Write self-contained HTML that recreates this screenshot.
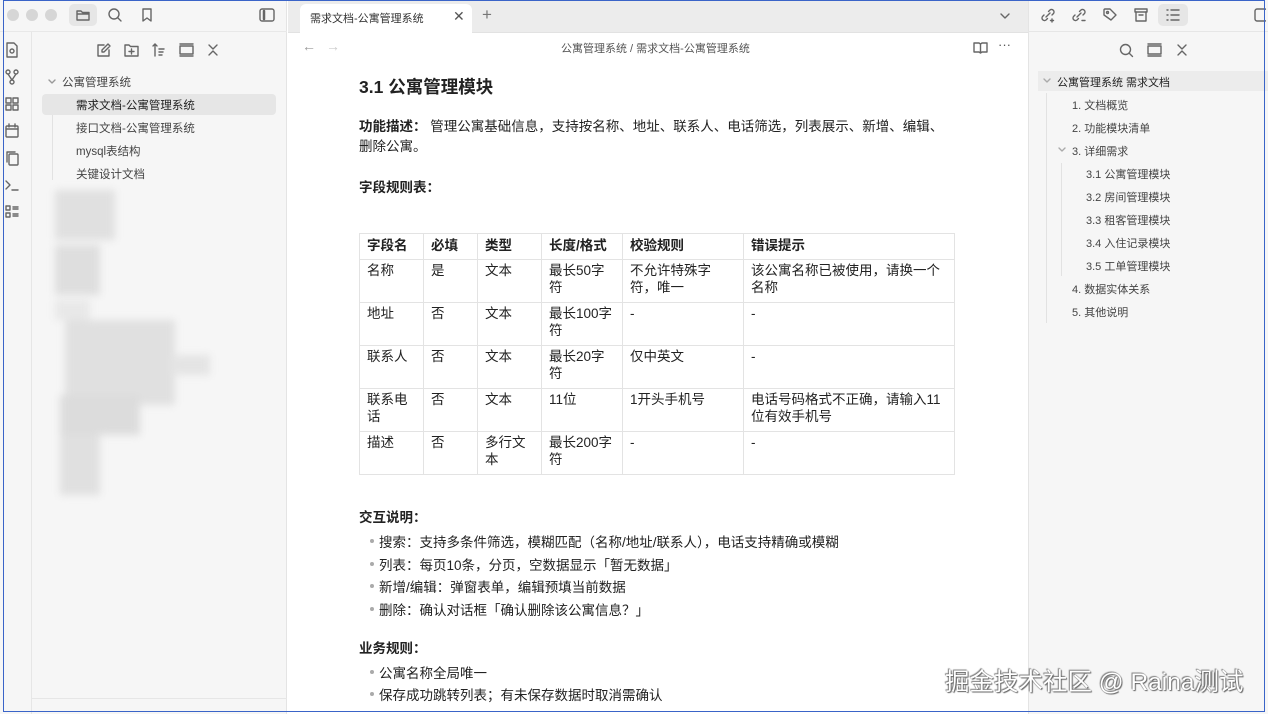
<!DOCTYPE html>
<html><head><meta charset="utf-8">
<style>
*{margin:0;padding:0;box-sizing:border-box}
body{width:1268px;height:714px;overflow:hidden;background:#fff;font-family:"Liberation Sans","Noto Sans CJK SC",sans-serif;color:#222;position:relative}
.a{position:absolute}
.t{font-size:11.5px;color:#444;white-space:nowrap}
svg.i{position:absolute;fill:none;stroke:#666;stroke-width:1.4;stroke-linecap:round;stroke-linejoin:round}
table{border-collapse:collapse;font-size:13.5px;color:#222}
td,th{border:1px solid #e3e3e3;vertical-align:top;text-align:left;padding:2px 7px 4px 7px;line-height:17px;font-weight:normal;white-space:nowrap}
th{font-weight:bold;padding:3px 7px}
.b{font-size:13.5px;line-height:20px;color:#222;white-space:nowrap}
.li{font-size:13.5px;color:#222;white-space:nowrap}
.li:before{content:"";position:absolute;left:-9px;top:8px;width:4px;height:4px;border-radius:50%;background:#aaa}
.ol{font-size:11px;color:#444;white-space:nowrap}
</style></head><body>
<div class="a" style="left:0;top:0;width:287px;height:714px;background:#f6f6f6;border-right:1px solid #e4e4e4"></div>
<div class="a" style="left:31px;top:32px;width:1px;height:682px;background:#e6e6e6"></div>
<div class="a" style="left:0;top:31px;width:287px;height:1px;background:#e8e8e8"></div>
<div class="a" style="left:7px;top:9px;width:12px;height:12px;border-radius:50%;background:#d6d6d6"></div>
<div class="a" style="left:26px;top:9px;width:12px;height:12px;border-radius:50%;background:#d6d6d6"></div>
<div class="a" style="left:45px;top:9px;width:12px;height:12px;border-radius:50%;background:#d6d6d6"></div>
<div class="a" style="left:69px;top:4px;width:28px;height:22px;border-radius:5px;background:#e6e6e6"></div>
<svg class="i" style="left:75px;top:7px" width="16" height="16" viewBox="0 0 16 16"><path d="M2 4h4l1.5 1.5H14V13H2z M2 7h12"/></svg>
<svg class="i" style="left:107px;top:7px" width="16" height="16" viewBox="0 0 16 16"><circle cx="7" cy="7" r="5"/><path d="M11 11l3 3"/></svg>
<svg class="i" style="left:139px;top:7px" width="16" height="16" viewBox="0 0 16 16"><path d="M4 2h8v12l-4-3-4 3z"/></svg>
<svg class="i" style="left:258px;top:7px" width="18" height="16" viewBox="0 0 18 16"><rect x="2" y="2" width="14" height="12" rx="2"/><path d="M6 4v8" stroke-width="2.5"/></svg>
<svg class="i" style="left:5px;top:42px" width="14" height="16" viewBox="0 0 14 16"><path d="M2 1h7l3 3v11H2z"/><circle cx="7" cy="9" r="2"/></svg>
<svg class="i" style="left:5px;top:69px" width="14" height="16" viewBox="0 0 14 16"><circle cx="3" cy="3" r="2"/><circle cx="11" cy="3" r="2"/><circle cx="7" cy="13" r="2"/><path d="M3 5l4 6M11 5l-4 6"/></svg>
<svg class="i" style="left:5px;top:96px" width="14" height="16" viewBox="0 0 14 16"><rect x="1" y="2" width="5" height="5"/><rect x="8" y="2" width="5" height="5"/><rect x="1" y="9" width="5" height="5"/><rect x="8" y="9" width="5" height="5"/></svg>
<svg class="i" style="left:5px;top:123px" width="14" height="16" viewBox="0 0 14 16"><rect x="1" y="3" width="12" height="11" rx="1"/><path d="M1 6h12M4 1v3M10 1v3"/></svg>
<svg class="i" style="left:5px;top:150px" width="14" height="16" viewBox="0 0 14 16"><rect x="4" y="4" width="9" height="11" rx="1"/><path d="M2 12V2h8"/></svg>
<svg class="i" style="left:5px;top:177px" width="14" height="16" viewBox="0 0 14 16"><path d="M1 4l4 4-4 4M7 13h6"/></svg>
<svg class="i" style="left:5px;top:204px" width="14" height="16" viewBox="0 0 14 16"><rect x="1" y="2" width="4" height="4"/><rect x="1" y="9" width="4" height="4"/><path d="M8 3h5M8 5h5M8 10h5M8 12h5"/></svg>
<svg class="i" style="left:97px;top:43px" width="14" height="14" viewBox="0 0 14 14"><path d="M12 7v6H1V2h6M11 1l2 2-6 6H5V7z"/></svg>
<svg class="i" style="left:124px;top:43px" width="15" height="14" viewBox="0 0 15 14"><path d="M1 2h4l1.5 1.5H14V13H1z M7.5 6v5M5 8.5h5"/></svg>
<svg class="i" style="left:152px;top:43px" width="14" height="14" viewBox="0 0 14 14"><path d="M3 13V1M1 3l2-2 2 2M7 6h5M7 9h4M7 12h3"/></svg>
<svg class="i" style="left:179px;top:43px" width="15" height="14" viewBox="0 0 15 14"><rect x="1" y="3" width="13" height="8"/><path d="M1 1h13M1 13h13"/></svg>
<svg class="i" style="left:207px;top:43px" width="12" height="14" viewBox="0 0 12 14"><path d="M2 2l4 4 4-4M2 12l4-4 4 4"/></svg>
<svg class="i" style="left:47px;top:77px" width="10" height="10" viewBox="0 0 10 10"><path d="M2 3l3 3 3-3" stroke="#999"/></svg>
<div class="a t" style="left:62px;top:74px">公寓管理系统</div>
<div class="a" style="left:52px;top:100px;width:1px;height:80px;background:#e2e2e2"></div>
<div class="a" style="left:42px;top:94px;width:234px;height:21px;border-radius:4px;background:#e6e6e6"></div>
<div class="a t" style="left:76px;top:97px;color:#222">需求文档-公寓管理系统</div>
<div class="a t" style="left:76px;top:120px">接口文档-公寓管理系统</div>
<div class="a t" style="left:76px;top:143px">mysql表结构</div>
<div class="a t" style="left:76px;top:166px">关键设计文档</div>
<div class="a" style="left:50px;top:185px;width:170px;height:310px;filter:blur(4px)">
<div class="a" style="left:5px;top:5px;width:60px;height:50px;background:#e0e0e0"></div>
<div class="a" style="left:5px;top:60px;width:45px;height:50px;background:#dedede"></div>
<div class="a" style="left:5px;top:115px;width:35px;height:20px;background:#e8e8e8"></div>
<div class="a" style="left:15px;top:135px;width:110px;height:85px;background:#e0e0e0"></div>
<div class="a" style="left:120px;top:170px;width:40px;height:20px;background:#e4e4e4"></div>
<div class="a" style="left:10px;top:210px;width:80px;height:40px;background:#dcdcdc"></div>
<div class="a" style="left:10px;top:250px;width:40px;height:60px;background:#e0e0e0"></div>
</div>
<div class="a" style="left:31px;top:698px;width:256px;height:1px;background:#e6e6e6"></div>
<div class="a" style="left:288px;top:0;width:740px;height:33px;background:#ececec;border-bottom:1px solid #e2e2e2"></div>
<div class="a" style="left:300px;top:4px;width:172px;height:29px;background:#fff;border-radius:6px 6px 0 0"></div>
<div class="a t" style="left:310px;top:10px;font-size:11px;color:#333">需求文档-公寓管理系统</div>
<div class="a" style="left:453px;top:8px;font-size:14px;color:#555">✕</div>
<div class="a" style="left:482px;top:5px;font-size:17px;color:#777">+</div>
<svg class="i" style="left:999px;top:10px" width="12" height="12" viewBox="0 0 12 12"><path d="M2 4l4 4 4-4"/></svg>
<div class="a" style="left:302px;top:38px;font-size:14px;color:#999">←</div>
<div class="a" style="left:326px;top:38px;font-size:14px;color:#ccc">→</div>
<div class="a t" style="left:561px;top:40px;font-size:11px;color:#555">公寓管理系统 / 需求文档-公寓管理系统</div>
<svg class="i" style="left:973px;top:41px" width="15" height="13" viewBox="0 0 15 13"><path d="M1 2h5l1.5 1v9L6 11H1zM14 2H9L7.5 3M14 2v9H9l-1.5 1"/></svg>
<div class="a" style="left:998px;top:37px;font-size:13px;color:#555">···</div>
<div class="a" style="left:1028px;top:0;width:240px;height:714px;background:#f6f6f6;border-left:1px solid #e4e4e4"></div>
<div class="a" style="left:1028px;top:31px;width:240px;height:1px;background:#e6e6e6"></div>
<svg class="i" style="left:1040px;top:7px" width="16" height="16" viewBox="0 0 16 16"><path d="M6 10l4-4M4 8l-1.5 1.5a2.5 2.5 0 003.5 3.5L7.5 11.5M12 8l1.5-1.5A2.5 2.5 0 0010 3L8.5 4.5M12 12v3M10.5 13.5h3"/></svg>
<svg class="i" style="left:1071px;top:7px" width="16" height="16" viewBox="0 0 16 16"><path d="M6 10l4-4M4 8l-1.5 1.5a2.5 2.5 0 003.5 3.5L7.5 11.5M12 8l1.5-1.5A2.5 2.5 0 0010 3L8.5 4.5M11 13.5h3"/></svg>
<svg class="i" style="left:1102px;top:7px" width="16" height="16" viewBox="0 0 16 16"><path d="M2 8V3a1 1 0 011-1h5l6 6-5 5z"/><circle cx="5.5" cy="5.5" r="1"/></svg>
<svg class="i" style="left:1133px;top:7px" width="16" height="16" viewBox="0 0 16 16"><rect x="2" y="2" width="12" height="3"/><path d="M3 5v9h10V5M6 8h4"/></svg>
<div class="a" style="left:1158px;top:4px;width:30px;height:22px;border-radius:5px;background:#e6e6e6"></div>
<svg class="i" style="left:1165px;top:7px" width="16" height="16" viewBox="0 0 16 16"><path d="M2 3h1M2 8h1M2 13h1M6 3h8M6 8h8M6 13h8"/></svg>
<svg class="i" style="left:1254px;top:8px" width="12" height="14" viewBox="0 0 12 14"><rect x="1" y="1" width="12" height="12" rx="2"/></svg>
<svg class="i" style="left:1119px;top:43px" width="15" height="15" viewBox="0 0 15 15"><circle cx="6.5" cy="6.5" r="5"/><path d="M10.5 10.5l3 3"/></svg>
<svg class="i" style="left:1147px;top:43px" width="15" height="14" viewBox="0 0 15 14"><rect x="1" y="3" width="13" height="8"/><path d="M1 1h13M1 13h13"/></svg>
<svg class="i" style="left:1176px;top:43px" width="12" height="14" viewBox="0 0 12 14"><path d="M2 2l4 4 4-4M2 12l4-4 4 4"/></svg>
<div class="a" style="left:1038px;top:71px;width:230px;height:20px;background:#ececec"></div>
<svg class="i" style="left:1042px;top:76px" width="10" height="10" viewBox="0 0 10 10"><path d="M2 3l3 3 3-3" stroke="#aaa"/></svg>
<div class="a ol" style="left:1057px;top:74px;color:#222">公寓管理系统 需求文档</div>
<div class="a" style="left:1046px;top:93px;width:1px;height:230px;background:#e2e2e2"></div>
<div class="a ol" style="left:1072px;top:97px">1. 文档概览</div>
<div class="a ol" style="left:1072px;top:120px">2. 功能模块清单</div>
<svg class="i" style="left:1057px;top:145px" width="10" height="10" viewBox="0 0 10 10"><path d="M2 3l3 3 3-3" stroke="#aaa"/></svg>
<div class="a ol" style="left:1072px;top:143px">3. 详细需求</div>
<div class="a" style="left:1061px;top:163px;width:1px;height:113px;background:#e2e2e2"></div>
<div class="a ol" style="left:1086px;top:166px">3.1 公寓管理模块</div>
<div class="a ol" style="left:1086px;top:189px">3.2 房间管理模块</div>
<div class="a ol" style="left:1086px;top:212px">3.3 租客管理模块</div>
<div class="a ol" style="left:1086px;top:235px">3.4 入住记录模块</div>
<div class="a ol" style="left:1086px;top:258px">3.5 工单管理模块</div>
<div class="a ol" style="left:1072px;top:281px">4. 数据实体关系</div>
<div class="a ol" style="left:1072px;top:304px">5. 其他说明</div>
<div class="a" style="left:359px;top:74px;font-size:17.5px;font-weight:bold;color:#222">3.1 公寓管理模块</div>
<div class="a b" style="left:359px;top:117px"><b>功能描述：</b> 管理公寓基础信息，支持按名称、地址、联系人、电话筛选，列表展示、新增、编辑、<br>删除公寓。</div>
<div class="a b" style="left:359px;top:178px"><b>字段规则表：</b></div>
<table class="a" style="left:359px;top:233px;width:596px">
<tr style="height:26px"><th style="width:64px">字段名</th><th style="width:54px">必填</th><th style="width:64px">类型</th><th style="width:81px">长度/格式</th><th style="width:121px">校验规则</th><th>错误提示</th></tr>
<tr style="height:43px"><td>名称</td><td>是</td><td>文本</td><td>最长50字<br>符</td><td>不允许特殊字<br>符，唯一</td><td>该公寓名称已被使用，请换一个<br>名称</td></tr>
<tr style="height:43px"><td>地址</td><td>否</td><td>文本</td><td>最长100字<br>符</td><td>-</td><td>-</td></tr>
<tr style="height:43px"><td>联系人</td><td>否</td><td>文本</td><td>最长20字<br>符</td><td>仅中英文</td><td>-</td></tr>
<tr style="height:43px"><td>联系电<br>话</td><td>否</td><td>文本</td><td>11位</td><td>1开头手机号</td><td>电话号码格式不正确，请输入11<br>位有效手机号</td></tr>
<tr style="height:43px"><td>描述</td><td>否</td><td>多行文<br>本</td><td>最长200字<br>符</td><td>-</td><td>-</td></tr>
</table>
<div class="a b" style="left:359px;top:508px"><b>交互说明：</b></div>
<div class="a li" style="left:379px;top:531px">搜索：支持多条件筛选，模糊匹配（名称/地址/联系人），电话支持精确或模糊</div>
<div class="a li" style="left:379px;top:554px">列表：每页10条，分页，空数据显示「暂无数据」</div>
<div class="a li" style="left:379px;top:576px">新增/编辑：弹窗表单，编辑预填当前数据</div>
<div class="a li" style="left:379px;top:599px">删除：确认对话框「确认删除该公寓信息？」</div>
<div class="a b" style="left:359px;top:639px"><b>业务规则：</b></div>
<div class="a li" style="left:379px;top:662px">公寓名称全局唯一</div>
<div class="a li" style="left:379px;top:684px">保存成功跳转列表；有未保存数据时取消需确认</div>
<div class="a" style="left:945px;top:663px;font-size:24.5px;color:#fff;white-space:nowrap;text-shadow:0 0 1px #555,1px 1px 1px #666,-1px -1px 1px #888">掘金技术社区 @ Raina测试</div>
<div class="a" style="left:3px;top:0;width:1262px;height:712px;border:1.5px solid #3a64c8;border-top-width:1px;pointer-events:none"></div>
</body></html>
